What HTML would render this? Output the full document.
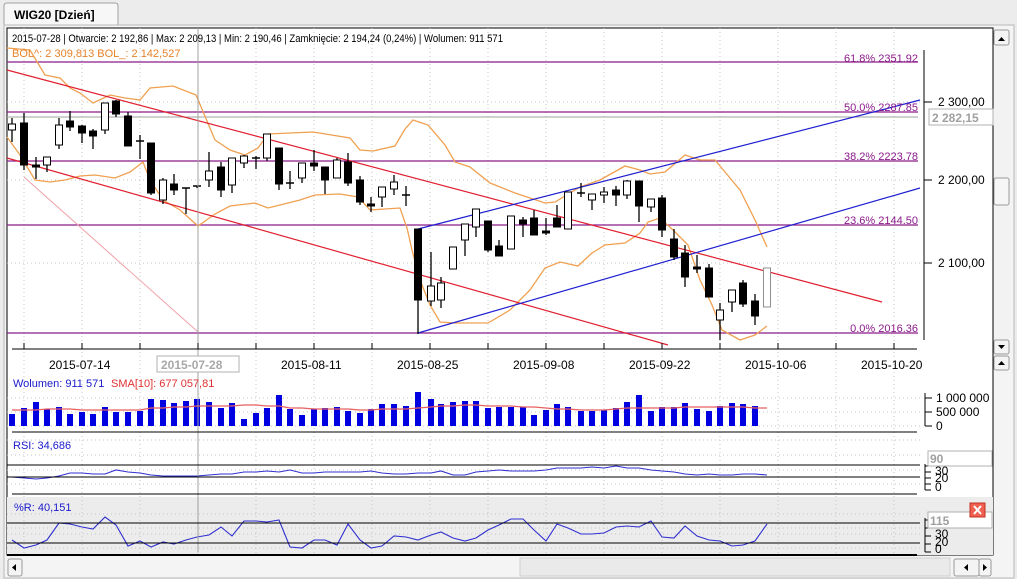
<!DOCTYPE html>
<html><head><meta charset="utf-8"><style>
body{margin:0;width:1017px;height:579px;background:#f0f0f0;overflow:hidden;font-family:"Liberation Sans",sans-serif}
svg{position:absolute;left:0;top:0}
</style></head><body>
<svg id="s" width="1017" height="579" xmlns="http://www.w3.org/2000/svg" font-family="Liberation Sans, sans-serif" font-size="11">
<rect x="0" y="0" width="1017" height="579" fill="#ececec"/>
<path d="M4 25 V6 Q4 3 7 3 H115 Q118 3 118 6 V25" fill="#f7f7f7" stroke="#a0a0a0"/>
<text x="14" y="19" font-weight="bold" font-size="12">WIG20 [Dzień]</text>
<rect x="4" y="25" width="1010" height="553" fill="#f4f4f4" stroke="#b8b8b8"/>
<rect x="7" y="28" width="986" height="527" fill="#fff" stroke="#000"/>
<rect x="7" y="497" width="986" height="58" fill="#ececec"/>
<g id="grid"></g>
<g id="main"></g>
<line x1="198" y1="28" x2="198" y2="552" stroke="#a0a0a0"/>
<text x="12" y="42" fill="#000" textLength="491" lengthAdjust="spacingAndGlyphs">2015-07-28 | Otwarcie: 2 192,86 | Max: 2 209,13 | Min: 2 190,46 | Zamknięcie: 2 194,24 (0,24%)  | Wolumen: 911 571</text>
<text x="12" y="57" fill="#e8822a">BOL^: 2 309,813  BOL_: 2 142,527</text>
<g fill="#8b1a8b" font-size="11">
<text x="918" y="62" text-anchor="end">61.8% 2351.92</text>
<text x="918" y="111" text-anchor="end">50.0% 2287.85</text>
<text x="918" y="160" text-anchor="end">38.2% 2223.78</text>
<text x="918" y="224" text-anchor="end">23.6% 2144.50</text>
<text x="918" y="332" text-anchor="end">0.0% 2016.36</text>
</g>
<line x1="924" y1="50" x2="924" y2="340" stroke="#000"/>
<g stroke="#000"><line x1="924" y1="102" x2="932" y2="102"/><line x1="924" y1="180" x2="932" y2="180"/><line x1="924" y1="263" x2="932" y2="263"/></g>
<g font-size="12"><text x="938" y="106">2 300,00</text><text x="938" y="184">2 200,00</text><text x="938" y="267">2 100,00</text></g>
<rect x="929" y="109" width="64" height="16" fill="#fff" stroke="#b0b0b0"/>
<text x="932" y="122" fill="#a0a0a0" font-weight="bold" font-size="12">2 282,15</text>
<line x1="12" y1="349" x2="917" y2="349" stroke="#000"/>
<g id="ticks" stroke="#000"></g>
<g font-size="12">
<text x="49" y="369">2015-07-14</text><text x="281" y="369">2015-08-11</text><text x="397" y="369">2015-08-25</text><text x="513" y="369">2015-09-08</text><text x="629" y="369">2015-09-22</text><text x="745" y="369">2015-10-06</text><text x="861" y="369">2015-10-20</text>
</g>
<rect x="157" y="356" width="82" height="16" fill="#fff" stroke="#b0b0b0"/>
<text x="161" y="369" font-size="12" font-weight="bold" fill="#a8a8a8">2015-07-28</text>
<text x="13" y="387" fill="#1a1acc">Wolumen: 911 571</text><text x="111" y="387" fill="#e03030">SMA[10]: 677 057,81</text>
<line x1="12" y1="432" x2="917" y2="432" stroke="#000"/>
<line x1="12" y1="494" x2="917" y2="494" stroke="#000"/>
<line x1="7" y1="555" x2="917" y2="555" stroke="#000" stroke-width="2"/>
<path d="M925 393 V426 M925 398 H932 M925 412 H932 M925 426 H932" stroke="#000" fill="none"/>
<g font-size="12"><text x="936" y="402">1 000 000</text><text x="936" y="416">500 000</text><text x="936" y="430">0</text></g>
<text x="13" y="449" fill="#1a1acc">RSI: 34,686</text>
<text x="14" y="511" fill="#1a1acc">%R: 40,151</text>
<line x1="7" y1="465" x2="920" y2="465" stroke="#000"/><line x1="7" y1="477" x2="920" y2="477" stroke="#000"/>
<line x1="7" y1="523" x2="920" y2="523" stroke="#000"/><line x1="7" y1="543" x2="920" y2="543" stroke="#000"/>
<path d="M925 464 V490 M925 466H931 M925 472H931 M925 478H931 M925 484H931 M925 490H931" stroke="#000" fill="none"/>
<text x="935" y="491" font-size="12">0</text><text x="935" y="482" font-size="12">20</text><text x="935" y="475" font-size="12">30</text>
<rect x="928" y="451" width="64" height="15" fill="#fff" stroke="#b0b0b0"/><text x="930" y="463" font-weight="bold" font-size="12" fill="#a0a0a0">90</text>
<path d="M925 518 V552 M925 520H931 M925 528H931 M925 536H931 M925 544H931 M925 552H931" stroke="#000" fill="none"/>
<text x="935" y="553" font-size="12">0</text><text x="935" y="546" font-size="12">20</text><text x="935" y="538" font-size="12">30</text>
<rect x="928" y="512" width="64" height="16" fill="#fff" stroke="#b0b0b0"/><text x="930" y="525" font-weight="bold" font-size="12" fill="#a0a0a0">115</text>
<rect x="970" y="503" width="15" height="14" fill="#f06050" stroke="#c03020"/><path d="M974 506 L981 514 M981 506 L974 514" stroke="#fff" stroke-width="2"/>
<rect x="994" y="29" width="16" height="325" fill="#f2f2f2"/>
<rect x="994" y="30" width="15" height="15" fill="#f4f4f4" stroke="#999" rx="2"/><path d="M998 41 L1001.5 37 L1005 41Z" fill="#000"/>
<rect x="994" y="178" width="15" height="27" fill="#f6f6f6" stroke="#999" rx="2"/>
<rect x="994" y="340" width="15" height="14" fill="#f4f4f4" stroke="#999" rx="2"/><path d="M998 345 L1001.5 349 L1005 345Z" fill="#000"/>
<rect x="994" y="356" width="15" height="14" fill="#f4f4f4" stroke="#999" rx="2"/><path d="M998 365 L1001.5 361 L1005 365Z" fill="#000"/>
<rect x="8" y="559" width="14" height="17" fill="#f4f4f4" stroke="#999" rx="2"/><path d="M16 564 L12 567.5 L16 571Z" fill="#000"/>
<rect x="954" y="559" width="25" height="17" fill="#f4f4f4" stroke="#999" rx="2"/><path d="M968 564 L964 567.5 L968 571Z" fill="#000"/>
<rect x="979" y="559" width="12" height="17" fill="#f4f4f4" stroke="#999" rx="2"/><path d="M983 564 L987 567.5 L983 571Z" fill="#000"/>
<rect x="520" y="558" width="430" height="18" fill="#eaeaea" stroke="#d0d0d0"/>
</svg>
<script>
var NS="http://www.w3.org/2000/svg";
function el(p,t,a){var e=document.createElementNS(NS,t);for(var k in a)e.setAttribute(k,a[k]);document.getElementById(p).appendChild(e);return e;}
for(var x=24;x<920;x+=58){el('grid','line',{x1:x,y1:28,x2:x,y2:555,stroke:'#c4c4c4','stroke-dasharray':'1,3'});}
[102,180,263,398,412,426,440,455,470,484,514,528,534,548].forEach(function(y){el('grid','line',{x1:7,y1:y,x2:920,y2:y,stroke:'#c4c4c4','stroke-dasharray':'1,3'});});
for(var x=24;x<920;x+=58){el('ticks','line',{x1:x,y1:343,x2:x,y2:349});}
[62,112,161,225,333].forEach(function(y){el('main','line',{x1:7,y1:y,x2:918,y2:y,stroke:'#8b1a8b','stroke-width':1.3});});
el('main','line',{x1:7,y1:117,x2:918,y2:117,stroke:'#a0a0a0'});
var up=[[7,48],[30,50],[45,75],[60,78],[70,88],[80,93],[93,103],[110,95],[125,98],[140,100],[150,88],[173,86],[196,95],[215,140],[230,150],[245,155],[258,148],[268,134],[290,133],[313,132],[350,138],[360,150],[373,151],[395,146],[405,129],[413,120],[428,125],[445,145],[455,162],[470,167],[490,183],[515,193],[545,203],[555,202],[580,187],[600,180],[625,166],[640,170],[650,174],[665,172],[685,155],[700,160],[715,160],[730,178],[740,190],[755,220],[767,247]];
var lo=[[7,137],[20,155],[35,180],[50,182],[65,180],[80,176],[95,175],[115,178],[130,172],[143,162],[150,180],[163,200],[180,210],[198,226],[215,214],[230,206],[255,203],[268,208],[280,205],[300,200],[315,195],[340,194],[358,197],[370,210],[400,208],[407,228],[412,250],[420,280],[430,305],[440,322],[455,323],[488,323],[510,310],[530,290],[545,268],[560,262],[578,266],[592,253],[605,245],[625,243],[640,233],[648,222],[660,218],[673,230],[688,245],[700,280],[712,305],[722,330],[740,340],[755,335],[767,326]];
function pl(a){return a.map(function(p){return p.join(',')}).join(' ');}
el('main','polyline',{points:pl(up),fill:'none',stroke:'#f0a050','stroke-width':1.3});
el('main','polyline',{points:pl(lo),fill:'none',stroke:'#f0a050','stroke-width':1.3});
el('main','line',{x1:7,y1:70,x2:882,y2:302,stroke:'#e02030','stroke-width':1.2});
el('main','line',{x1:7,y1:158,x2:668,y2:345,stroke:'#e02030','stroke-width':1.2});
el('main','line',{x1:24,y1:177,x2:198,y2:332,stroke:'#f0a0a8'});
el('main','line',{x1:418,y1:229,x2:920,y2:100,stroke:'#2020d0','stroke-width':1.2});
el('main','line',{x1:418,y1:333,x2:920,y2:188,stroke:'#2020d0','stroke-width':1.2});
var C=[[12,124,130,118,142,'w'],[24,123,165,113,170,'b'],[36,165,167,157,179,'b'],[47,157,165,157,172,'w'],[59,125,145,118,149,'w'],[70,121,127,111,131,'b'],[82,126,133,125,143,'b'],[93,131,136,129,149,'b'],[105,103,130,103,134,'w'],[116,101,114,100,117,'b'],[128,116,146,112,146,'b'],[140,141,141,135,159,'c'],[151,143,193,143,195,'b'],[163,180,200,178,204,'w'],[174,184,190,174,195,'b'],[186,188,188,188,214,'c'],[197,186,187,186,188,'c'],[209,171,180,152,187,'w'],[221,167,190,162,197,'b'],[232,158,185,158,193,'w'],[244,156,163,155,168,'w'],[256,158,158,156,169,'c'],[267,134,158,134,161,'w'],[279,148,184,148,190,'b'],[290,183,183,171,189,'c'],[302,163,178,163,183,'w'],[314,163,166,150,171,'b'],[325,167,180,167,194,'b'],[337,160,178,158,178,'w'],[348,162,183,153,186,'b'],[360,180,202,176,205,'b'],[371,204,206,197,212,'b'],[382,187,197,187,207,'w'],[394,182,189,175,195,'w'],[406,195,195,186,206,'c'],
[418,229,300,229,334,'b'],[431,286,301,252,306,'w'],[441,283,300,277,308,'w'],[453,247,269,247,269,'w'],[465,224,240,224,256,'w'],[476,209,227,209,237,'w'],[488,221,250,221,252,'b'],[499,246,256,240,256,'b'],[511,216,249,216,249,'w'],[523,220,224,217,237,'b'],[534,218,235,210,235,'b'],[546,231,233,218,235,'b'],[557,218,227,205,227,'b'],[568,192,229,192,229,'w'],[581,193,193,183,197,'c'],[592,194,200,194,210,'w'],[604,192,195,187,203,'w'],[616,190,195,186,206,'b'],[627,181,195,180,199,'w'],[639,181,206,181,222,'b'],[651,199,207,199,212,'w'],[662,198,230,195,237,'b'],[674,239,257,229,260,'b'],[685,253,277,245,287,'b'],[697,267,269,255,273,'b'],[709,268,297,264,297,'b'],[720,310,320,303,340,'w'],[732,290,302,290,312,'w'],[743,283,304,280,307,'b'],[755,301,316,294,325,'b'],[767,268,307,268,307,'g']];
C.forEach(function(c){var col=c[5]=='g'?'#909090':'#000';
el('main','line',{x1:c[0],y1:c[3],x2:c[0],y2:c[4],stroke:col,'stroke-width':1.3});
if(c[5]=='c'){el('main','line',{x1:c[0]-4,y1:c[1],x2:c[0]+4,y2:c[1],stroke:'#000','stroke-width':1.5});}
else el('main','rect',{x:c[0]-3.5,y:c[1],width:7,height:Math.max(2,c[2]-c[1]),fill:c[5]=='b'?'#000':'#fff',stroke:col});});
var V=[414,408,402,409,407,414,412,414,407,412,412,411,399,400,403,401,399,402,408,403,419,413,408,395,409,415,409,408,407,411,413,409,404,404,406,392,399,404,402,401,401,408,407,407,407,415,410,404,407,411,411,410,408,402,395,411,407,407,403,409,411,406,403,404,406];
C.forEach(function(c,i){if(i>=65)return;var t=V[i]||405;el('main','rect',{x:c[0]-3,y:t,width:6,height:426-t,fill:'#0000e0'});});
var smv=[410,410,410,409,409,409,410,410,410,410,410,410,408,408,407,407,406,406,406,406,405,405,406,406,408,408,409,409,409,409,410,410,409,409,409,408,407,406,406,405,405,406,406,406,407,407,408,409,409,410,410,410,409,408,408,408,408,408,407,407,407,407,407,407,408,408];
var sm=C.map(function(c,i){return [c[0],smv[i]];});
el('main','polyline',{points:pl(sm),fill:'none',stroke:'#e86060','stroke-width':1.3});
var R=[477,478,479,478,476,473,473,474,474,470,472,473,475,476,476,476,476,475,474,474,472,472,471,472,470,473,473,472,472,472,472,471,473,474,474,473,473,471,475,475,472,471,470,471,471,471,470,468,468,468,467,468,466,468,468,470,471,472,474,475,474,475,475,474,474,475,471];
el('main','polyline',{points:pl(C.map(function(c,i){return [c[0],R[i]];})),fill:'none',stroke:'#3030d0','stroke-width':1.1});
var W=[540,548,545,540,523,524,527,529,517,525,546,541,547,542,544,540,537,535,527,536,521,521,522,520,547,548,540,540,545,524,540,548,546,536,537,540,535,532,538,541,538,530,525,519,519,530,541,524,528,534,534,533,527,526,527,521,537,538,526,536,540,541,546,545,541,524];
el('main','polyline',{points:pl(C.map(function(c,i){return [c[0],W[i]];})),fill:'none',stroke:'#3030d0','stroke-width':1.1});
</script>
</body></html>
